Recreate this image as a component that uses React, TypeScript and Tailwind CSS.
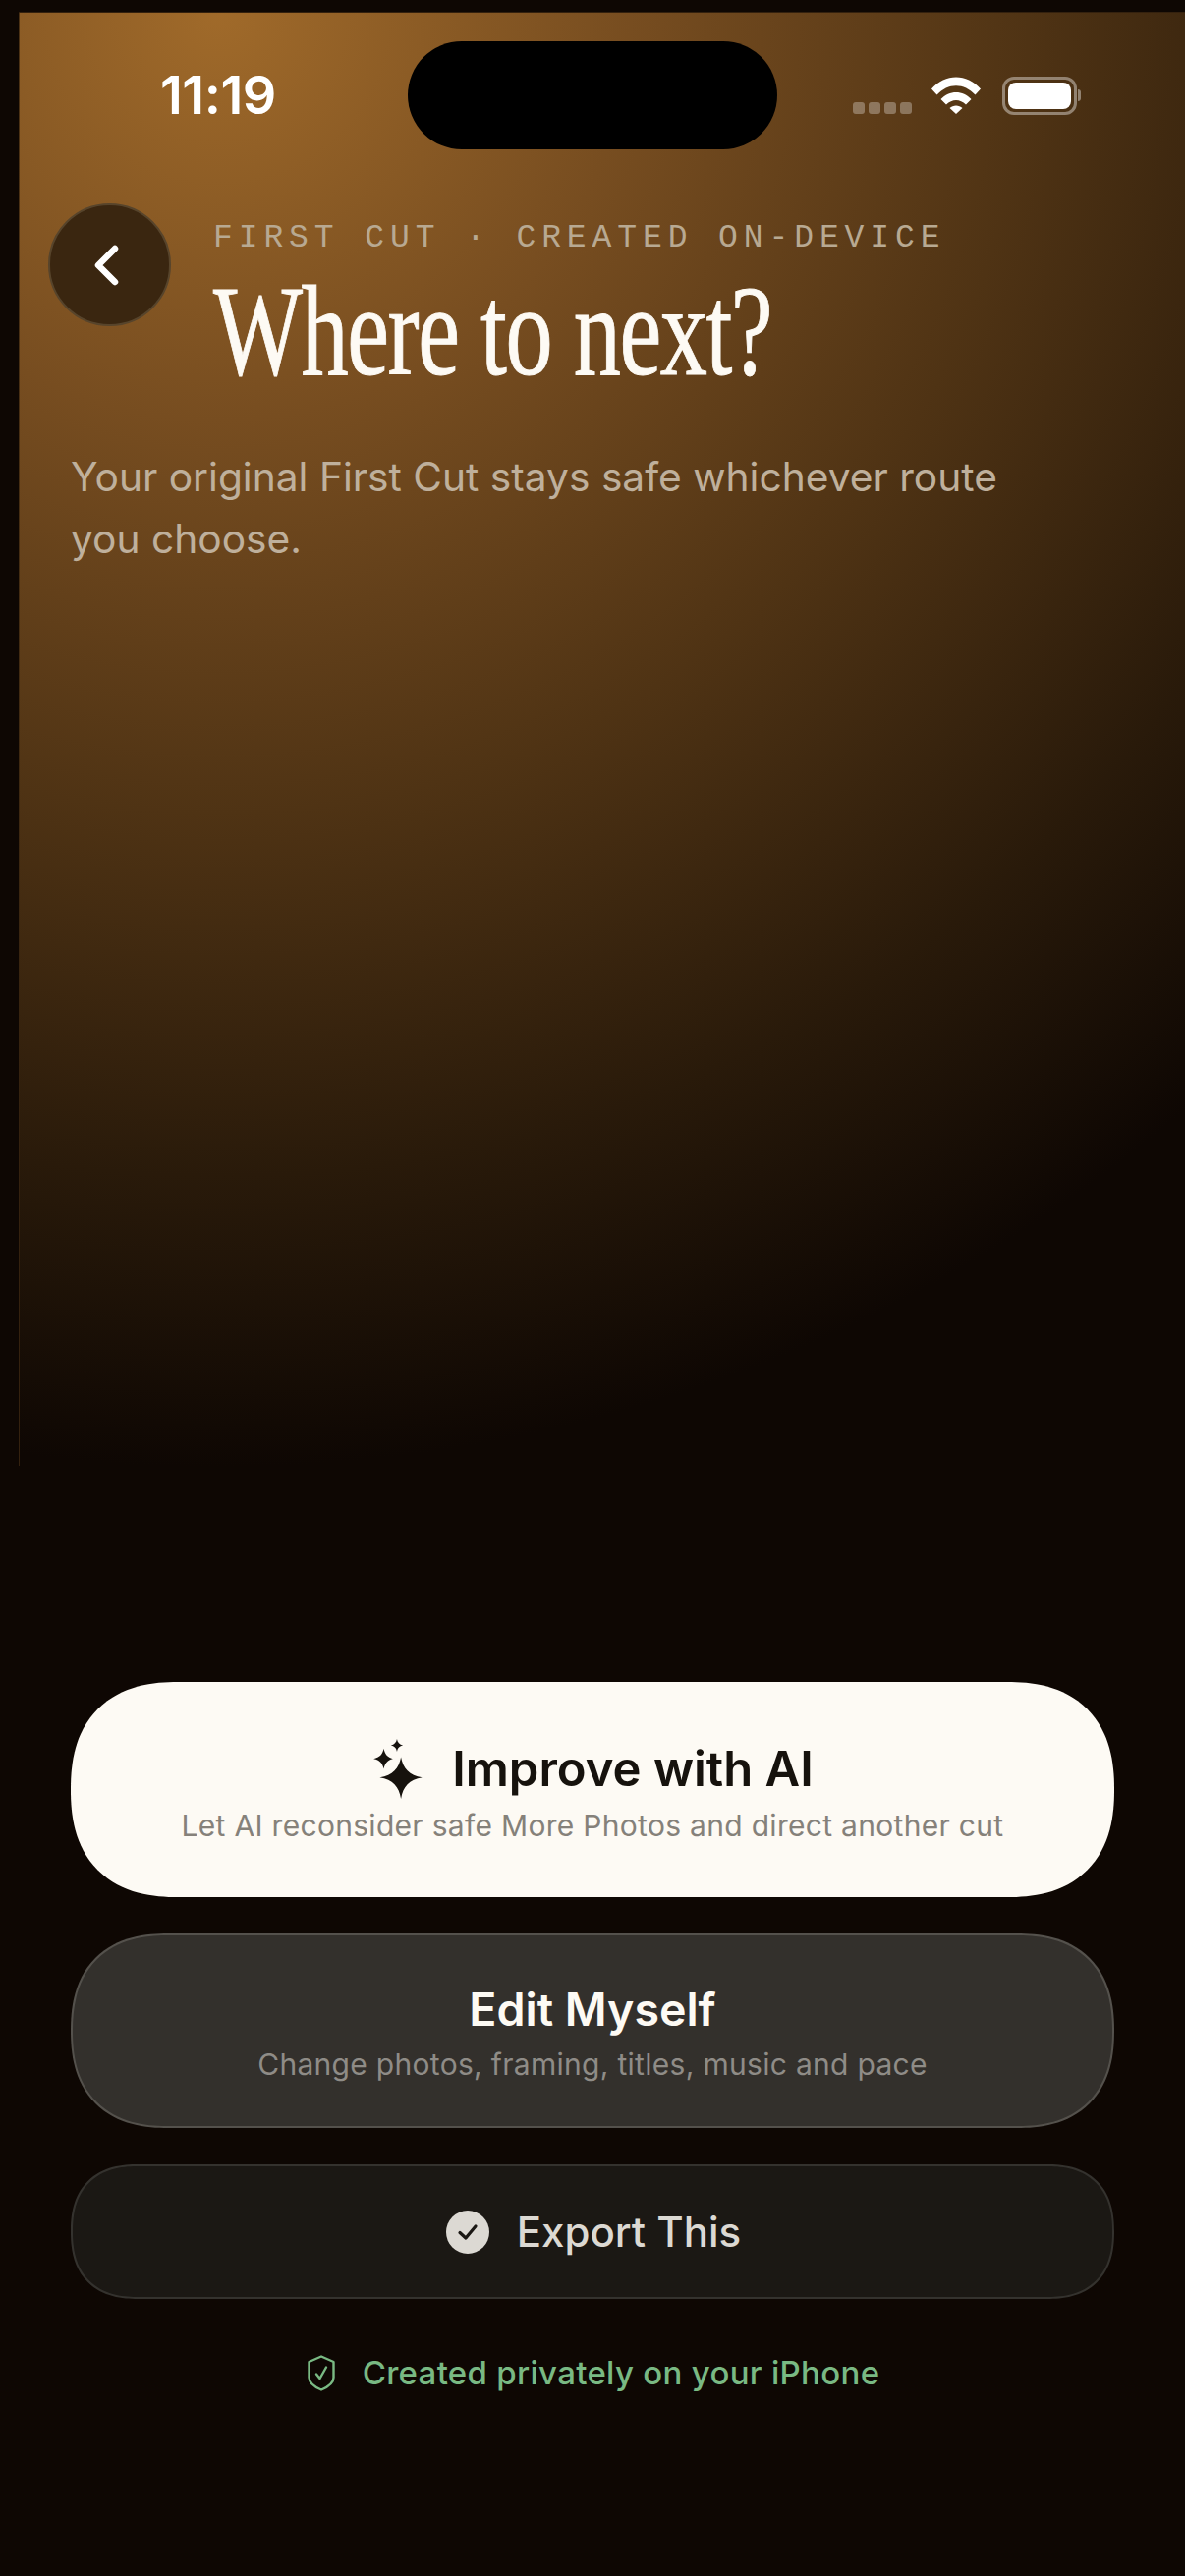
import React from "react";

const sans = "font-['Inter','Noto_Sans',sans-serif]";

function Sparkles() {
  return (
    <svg width="54" height="62" viewBox="0 0 52 60" className="fill-[#16120d]">
      <path d="M29 18 C31 29 37 36 50 38 C37 40 31 47 29 59 C27 47 21 40 8 38 C21 36 27 29 29 18 Z" />
      <path d="M12 9.5 C13 15 16 18.5 21 19.5 C16 20.5 13 24 12 29.5 C11 24 8 20.5 2 19.5 C8 18.5 11 15 12 9.5 Z" />
      <path d="M25 0 C25.6 3.5 27.5 5.6 31 6.2 C27.5 6.9 25.6 9 25 12.5 C24.4 9 22.5 6.9 19 6.2 C22.5 5.6 24.4 3.5 25 0 Z" />
    </svg>
  );
}

function Wifi() {
  return (
    <svg width="50" height="38" viewBox="0 0 50 38" className="fill-white">
      <path d="M0 12.5 C14 -3.5 36 -3.5 50 12.5 L44.5 18.5 C33 6 17 6 5.5 18.5 Z" />
      <path d="M9.5 23 C18 13.5 32 13.5 40.5 23 L35 28.5 C29 22.5 21 22.5 15 28.5 Z" />
      <path d="M18.5 32 C22 28.5 28 28.5 31.5 32 L25 38 Z" />
    </svg>
  );
}

function Shield() {
  return (
    <svg width="28" height="37" viewBox="0 0 28 37" fill="none" stroke="#79b983" strokeWidth="2.4" strokeLinejoin="round" strokeLinecap="round">
      <path d="M14 1.5 L26.5 7 V23 C26.5 28 21 32.5 14 35.5 C7 32.5 1.5 28 1.5 23 V7 Z" />
      <path d="M9 19.5 L12.5 24 L19 12.5" />
    </svg>
  );
}

export default function App() {
  return (
    <div className={`relative h-[2622px] w-[1206px] overflow-hidden bg-[#0e0703] ${sans}`}>
      {/* warm glow panel behind the header */}
      <div className="absolute left-[19px] top-[12px] h-[1480px] w-[1187px] border-l border-t border-[#5a3c1a]/50 bg-[radial-gradient(ellipse_1500px_1480px_at_17%_0%,#a06a2a_0%,#774d20_28%,#4f3314_55%,#291a0a_80%,#0e0703_100%)]" />

      <div className="relative flex h-full flex-col">
        {/* status bar */}
        <div className="flex h-[110px] items-center mt-[42px] pl-[163px] pr-[106px]">
          <span className="w-[252px] text-[54px] font-semibold leading-none tracking-[-0.5px] text-white">11:19</span>
          <div className="h-[110px] w-[376px] rounded-[55px] bg-black" />
          <div className="ml-auto flex items-center">
            <div className="mt-[26px] flex gap-[4px]">
              <span className="size-[12px] rounded-[3px] bg-white/30" />
              <span className="size-[12px] rounded-[3px] bg-white/30" />
              <span className="size-[12px] rounded-[3px] bg-white/30" />
              <span className="size-[12px] rounded-[3px] bg-white/30" />
            </div>
            <div className="ml-[20px]"><Wifi /></div>
            <div className="ml-[22px] flex items-center">
              <div className="h-[39px] w-[76px] rounded-[12px] border-[3px] border-white/40 p-[3px]">
                <div className="h-full w-full rounded-[8px] bg-white" />
              </div>
              <div className="ml-[1px] h-[12px] w-[3px] rounded-r-[3px] bg-white/40" />
            </div>
          </div>
        </div>

        {/* header */}
        <div className="mt-[55px] flex pl-[49px]">
          <div className="flex size-[125px] shrink-0 items-center justify-center rounded-full border-2 border-[#57442b] bg-[#3a2610]">
            <svg width="30" height="42" viewBox="0 0 30 42" fill="none" stroke="#fff" strokeWidth="6.5" strokeLinecap="round" strokeLinejoin="round" className="-ml-[6px]">
              <path d="M23 4 L6 21 L23 38" />
            </svg>
          </div>
          <div className="ml-[43px]">
            <p className="mt-[16px] whitespace-nowrap font-['Liberation_Mono',monospace] text-[33px] leading-[40px] tracking-[5.9px] text-[#b8a992]">FIRST CUT · CREATED ON-DEVICE</p>
            <h1 className="mt-[9px] origin-left scale-x-[0.73] whitespace-nowrap font-['Liberation_Serif',serif] text-[132px] font-normal leading-[130px] tracking-[-2px] text-[#fdfaf4] [-webkit-text-stroke:1px_#fdfaf4]">Where to next?</h1>
          </div>
        </div>

        <p className="mt-[52px] px-[72px] text-[40.7px] leading-[63px] text-[#bfb09c]">
          Your original First Cut stays safe whichever route<br />you choose.
        </p>

        {/* actions */}
        <div className="mt-auto flex flex-col gap-[37px] px-[72px] pb-[187px]">
          <button className="flex h-[219px] flex-col items-center justify-center rounded-[109px] bg-[#fdfaf4] pt-[2px] [corner-shape:superellipse(1.25)]">
            <span className="flex items-center gap-[28px] text-[49px] font-semibold leading-[62px] text-[#16120d]">
              <Sparkles />
              Improve with AI
            </span>
            <span className="mt-[8px] text-[30px] leading-[36px] tracking-[0.3px] text-[#85817a]">Let AI reconsider safe More Photos and direct another cut</span>
          </button>

          <button className="flex h-[198px] flex-col items-center justify-center rounded-[99px] border-2 border-[#54514c] bg-[#33302c] [corner-shape:superellipse(1.25)]">
            <span className="text-[46.5px] font-semibold leading-[60px] text-[#fdfaf4]">Edit Myself</span>
            <span className="mt-[8px] text-[30px] leading-[36px] tracking-[0.3px] text-[#8f8c87]">Change photos, framing, titles, music and pace</span>
          </button>

          <button className="flex h-[137px] items-center justify-center gap-[28px] rounded-[68px] border-2 border-[#34322e] bg-[#1b1814] pl-[2px] [corner-shape:superellipse(1.25)]">
            <span className="flex size-[44px] items-center justify-center rounded-full bg-[#dcd9d3]">
              <svg width="24" height="20" viewBox="0 0 24 20" fill="none" stroke="#1b1814" strokeWidth="3.2" strokeLinecap="round" strokeLinejoin="round">
                <path d="M4 10.5 L10 16 L20 4" />
              </svg>
            </span>
            <span className="text-[42px] font-medium leading-none text-[#dcd9d3]">Export This</span>
          </button>

          <div className="mt-[18px] flex items-center justify-center gap-[28px] pl-[2px]">
            <Shield />
            <span className="text-[33px] font-medium leading-[40px] tracking-[0.3px] text-[#79b983]">Created privately on your iPhone</span>
          </div>
        </div>
      </div>
    </div>
  );
}
